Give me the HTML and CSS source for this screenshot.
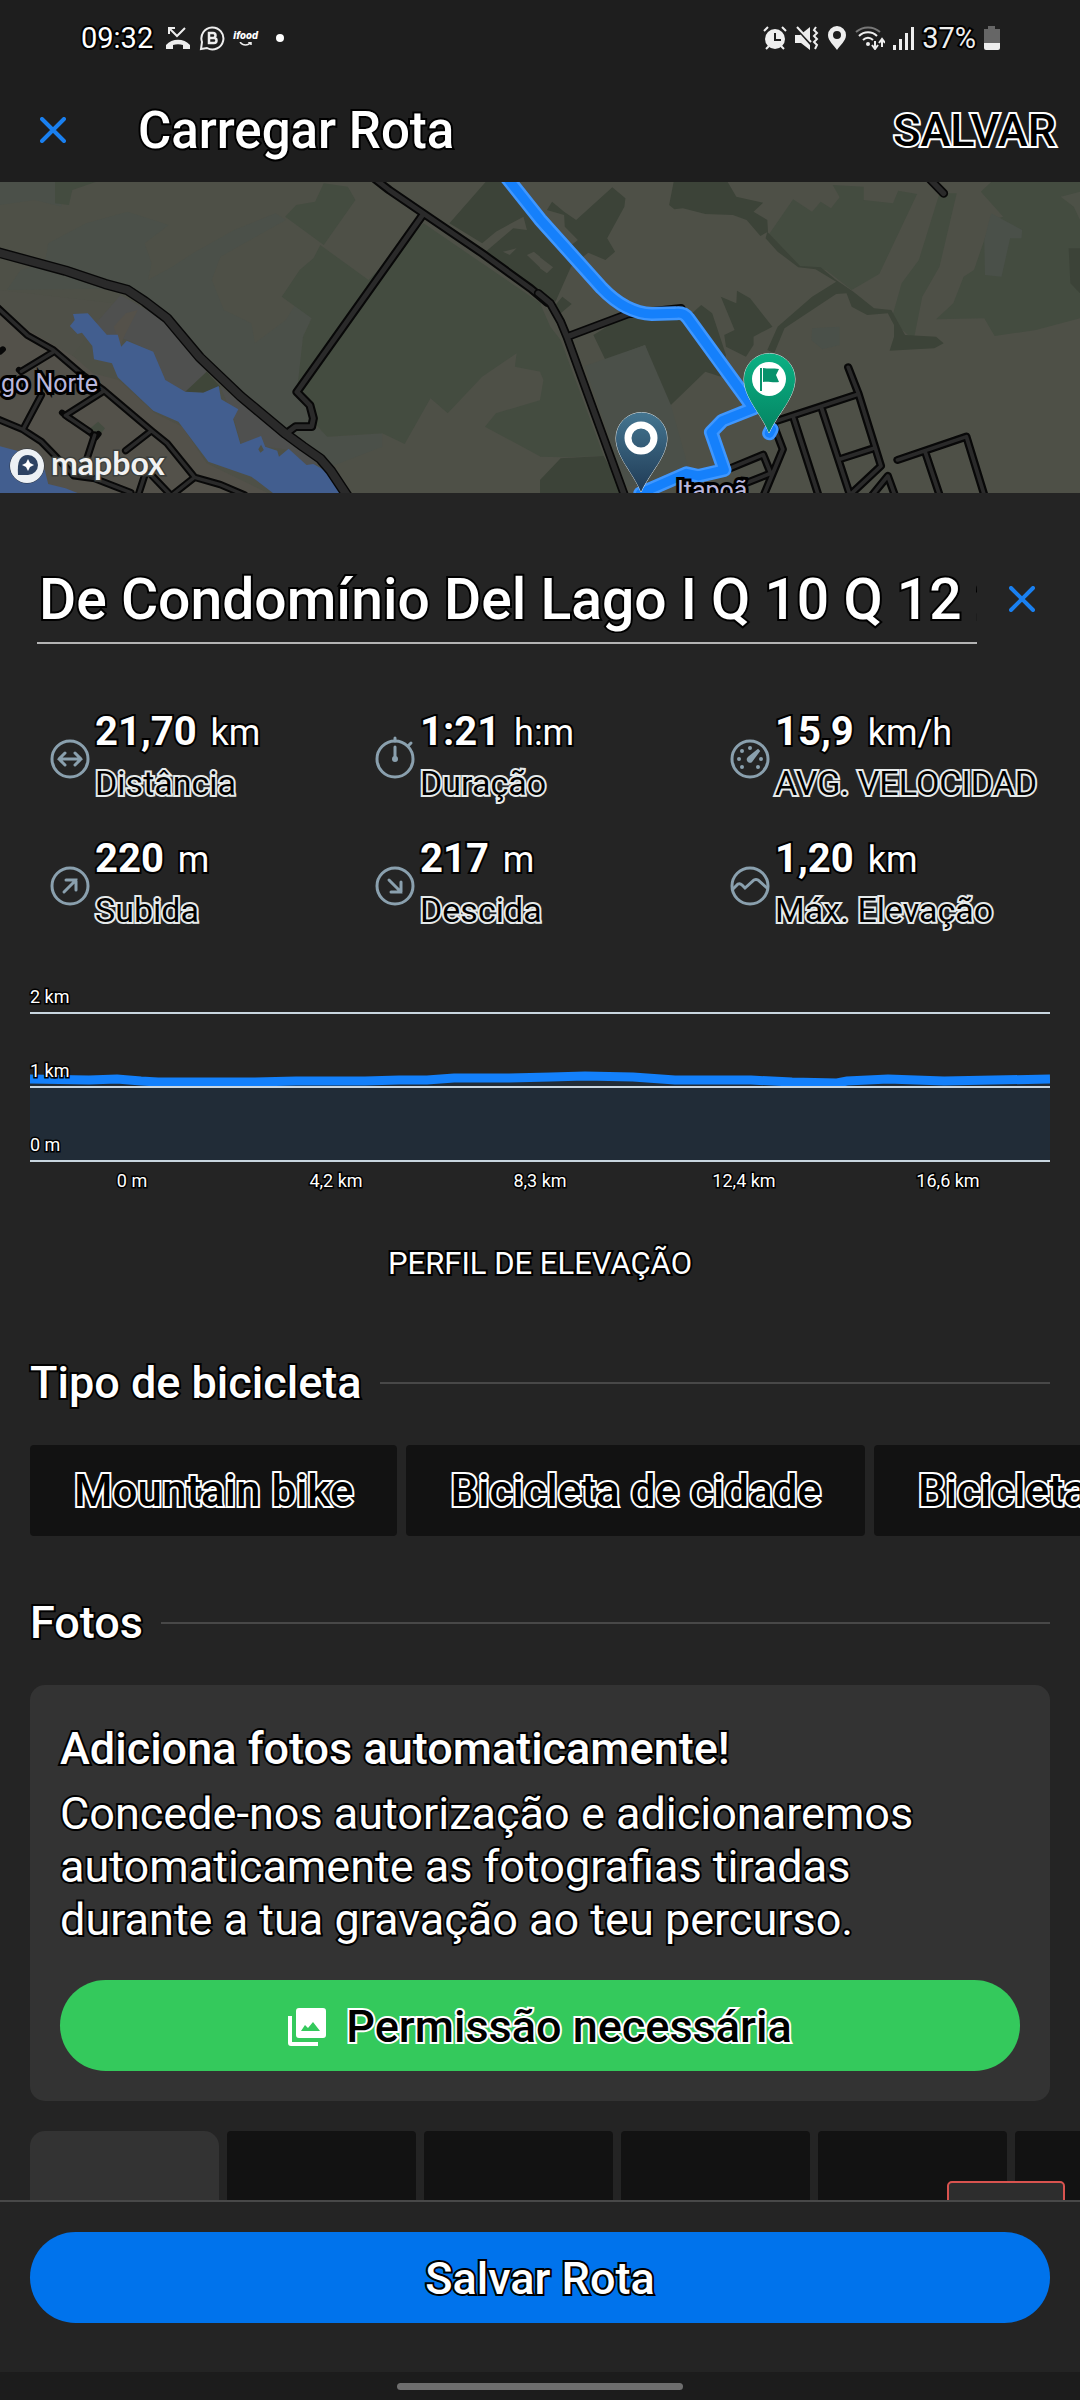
FILE: index.html
```html
<!DOCTYPE html>
<html lang="pt">
<head>
    <meta charset="UTF-8">
    <meta name="viewport" content="width=device-width, initial-scale=1.0">
    <title>Carregar Rota</title>
    <link rel="stylesheet" href="styles.css">
</head>
<body>

<div class="screen">

    <div class="statusbar">
        <span class="clock">09:32</span>
        <svg class="status-icon" width="26" height="26" viewBox="0 0 26 26" fill="none" stroke="#eee">
            <path d="M4 9V3h6M4 3l8 8 8-8" stroke-width="2"/>
            <path d="M1 24v-4c6-7 18-7 24 0v4h-7v-4c-3-1-7-1-10 0v4z" fill="#eee" stroke="none"/>
        </svg>
        <svg class="status-icon" width="26" height="26" viewBox="0 0 26 26" fill="none" stroke="#eee" stroke-width="2">
            <path d="M2 24l1-7A11 11 0 1 1 8 23z"/>
            <path d="M10 8h4a2.500 2.500 0 0 1 0 5h-4zM10 13h5a2.500 2.500 0 0 1 0 5h-5z" stroke-width="2.500"/>
        </svg>
        <span class="ifood">ifood
            <svg width="14" height="5" viewBox="0 0 14 5" fill="none" stroke="#eee" stroke-width="1.500"><path d="M1 0c3 4 8 4 11 0M9 0h3v3"/></svg>
        </span>
        <span class="dot"></span>

        <div class="status-right">
            <svg width="24" height="24" viewBox="0 0 24 24" fill="none" stroke="#eee" stroke-width="2">
                <circle cx="12" cy="13" r="10" fill="#eee" stroke="none"/>
                <path d="M12 7v7h6" stroke="#1e1e1e"/>
                <path d="M1 5l4-4M23 5l-4-4M3 23l3-3M21 23l-3-3"/>
            </svg>
            <svg width="24" height="24" viewBox="0 0 24 24" fill="none" stroke="#eee" stroke-width="2">
                <path d="M0 9h5l10-8v23l-9-7H0z" fill="#eee" stroke="none"/>
                <path d="M0 0l17 19" stroke="#1e1e1e" stroke-width="3"/>
                <path d="M2 1l14 15"/>
                <path d="M21 1l-2 3 3 3-3 3 3 3-3 3 3 3-2 4"/>
            </svg>
            <svg width="20" height="24" viewBox="0 0 20 24">
                <path d="M10 0a9 9 0 0 1 9 9c0 6-6 10-9 15C7 19 1 15 1 9a9 9 0 0 1 9-9zm0 5a4 4 0 1 0 0 8 4 4 0 0 0 0-8z" fill="#eee" fill-rule="evenodd"/>
            </svg>
            <svg width="30" height="24" viewBox="0 0 30 24" fill="none" stroke="#eee" stroke-width="2">
                <path d="M1 6c7-6 17-6 24 0" stroke="#777"/>
                <path d="M4 10c5-5 13-5 18 0M8 14c3-3 7-3 10 0"/>
                <circle cx="13" cy="18" r="2" fill="#eee" stroke="none"/>
                <path d="M20 15v7m-3-3l3 4 3-4M27 21v-7m-3 3l3-4 3 4"/>
            </svg>
            <svg width="21" height="24" viewBox="0 0 21 24" fill="#eee">
                <path d="M0 19h3v5H0zM6 13h3v11H6zM12 7h3v17h-3zM18 1h3v23h-3z"/>
            </svg>
            <span class="battery-text">37%</span>
            <svg width="16" height="24" viewBox="0 0 16 24">
                <path d="M4 0h7v3h5v14H0V3h4z" fill="#666"/>
                <path d="M0 17h16v5a2 2 0 0 1-2 2H2a2 2 0 0 1-2-2z" fill="#eee"/>
            </svg>
        </div>
    </div>

    <header class="appbar">
        <button class="icon-btn" aria-label="Fechar">
            <svg width="26" height="26" viewBox="0 0 26 26"><path d="M2 2l22 22M24 2L2 24"/></svg>
        </button>
        <h1>Carregar Rota</h1>
        <button class="save-link outlined">SALVAR</button>
    </header>

    <main class="content">

        <div class="map">
            <svg viewBox="0 0 1080 311" preserveAspectRatio="xMidYMid slice">
                <defs>
                    <linearGradient id="pin-blue" x1="0" y1="0" x2="0" y2="1">
                        <stop offset="0" stop-color="#447590"/>
                        <stop offset="1" stop-color="#203b56"/>
                    </linearGradient>
                    <linearGradient id="pin-green" x1="0" y1="0" x2="0" y2="1">
                        <stop offset="0" stop-color="#0bb184"/>
                        <stop offset="1" stop-color="#048462"/>
                    </linearGradient>
                    <!-- west side -->
                    <path id="west-main" d="M-10 216L190 272 305 312 370 330 420 364 485 415 580 532 700 650 830 762 880 800 930 836 960 872 1010 950"/>
                    <path id="west-mid" d="M1080 -10L1130 30 1232 102 1400 220 1540 325 1590 368M1228 104L862 636 900 676 910 715 905 740 858 740 832 760"/>
                    <path id="west-small" d="M-10 380L80 466 155 510 240 585M155 516L62 574M240 585L300 630 440 752 485 790 565 892 640 914 710 945M300 634L190 706 260 755M435 756L365 812M-10 716L65 748 120 785 170 838 215 888 275 896 380 938M120 645L68 746M565 892L500 945M400 950L422 880 435 880 495 945M275 765L248 850"/>
                    <!-- east side -->
                    <path id="east-mid" d="M-5 340L30 370 60 425 78 470 120 590 245 945M85 468L255 402 410 385M1125 -10L1172 40"/>
                    <path id="east-small" d="M680 725L925 642 895 562M925 642L990 858 900 945M735 710L808 945M818 686L900 945M870 838L965 806M680 740L705 808 650 945M545 868L648 824 670 880 560 925M965 945L1010 888 1030 945M1038 840L1238 770 1290 945M1118 815L1160 945"/>
                    <path id="route" d="M-110 -25L0 118 180 325C220 368 270 400 325 402L395 400C410 398 420 400 430 415L620 685 530 722 497 757 535 870 460 888 425 880 292 940M666 760L672 748"/>
                </defs>

                <rect width="1080" height="311" fill="#4e5047"/>

                <g transform="translate(0 -2) scale(.3444 .3333)">
                    <path fill="#4b5049" d="M0 0H160L180 80 100 60 0 75zM140 190L250 130 370 95 490 135 420 190 440 250 430 300 500 260 560 220 680 150 800 100 830 120 640 230 615 300 650 390 730 430 740 490 830 420 860 370 905 415 880 470 865 620 910 680 915 740 960 770 1110 760 1110 800 960 860 900 840 580 530 485 410 370 325 20 330 60 270 130 250z"/>
                    <path fill="#4f5048" d="M0 330L330 370 200 540 0 400z"/>
                    <path fill="#53514a" d="M0 400L215 530 270 580 345 600 450 700 530 740 600 850 790 945H0z"/>
                    <path fill="#4f504f" d="M350 345L480 420 600 575 540 635 475 600 440 515 370 480 300 460 270 440zM640 620L830 770 940 850 880 860 840 810 700 790 680 720z"/>
                    <path fill="#54514a" d="M365 400L400 390 360 470 350 500 330 440z"/>
                    <path fill="#3f4639" d="M600 575L640 620 590 638 538 635z"/>
                    <path fill="#444c40" d="M940 10L1010 20 1032 60 940 195 828 110 860 75 915 65zM930 195L1070 300 1230 130 1570 370V575L1495 560 1500 520 1400 590 1300 700 1250 655 1175 792 1110 760 950 770 905 720 910 680 862 636 880 470 905 415 818 350 870 270 910 235zM1570 660L1440 700 1408 740 1570 830zM160 0H295L210 30 200 75 160 70z"/>
                    <path fill="#3c4338" d="M1410 6L1305 130 1400 190 1440 155 1520 110 1530 150 1490 145 1410 215 1570 335V130L1460 6z"/>
                    <path fill="#4e5047" d="M1460 215L1500 205 1480 225zM1530 225L1550 215 1570 232V265z"/>
                    <path fill="#425e8f" d="M212 402L255 400 310 464H342L352 500 368 482 445 515 480 600 538 635 590 638 635 618 642 658 692 688 677 718 698 792 758 768 770 800 805 812 810 830 838 806 890 855 910 852 945 872 990 945H800L730 890 605 845 518 725 445 692 342 592 325 550 273 538 268 498 238 458 225 462 203 438 217 420zM-10 796L60 815 130 870 140 912 190 925 240 945H-10z"/>
                    <path fill="#4e5047" d="M750 808l8-14 8 16-10 8z"/>
                    <path fill="#444c40" d="M285 725L305 745 290 765 262 745z"/>

                    <g fill="none" stroke-linejoin="round" stroke-linecap="round">
                        <g stroke="#080808">
                            <use href="#west-small" stroke-width="22"/>
                            <use href="#west-mid" stroke-width="26"/>
                            <use href="#west-main" stroke-width="31"/>
                            <path stroke-width="18" d="M260 755L270 768M55 570L60 574M0 515L8 508M278 772L286 762M180 698L200 715"/>
                        </g>
                        <g stroke="#2a2a2a">
                            <use href="#west-small" stroke-width="10"/>
                            <use href="#west-mid" stroke-width="14"/>
                            <use href="#west-main" stroke-width="23"/>
                        </g>
                    </g>
                </g>

                <g transform="translate(540 -2) scale(.3444 .3333)">
                    <path fill="#444c40" d="M735 58L790 95 815 65 845 85 870 52 850 15 940 20V60L1025 70 1040 32 1095 42 985 282 905 330 830 270 750 258 660 170zM1160 40H1210L1160 260 1110 350 1085 480 1020 420 1050 310 1100 240zM1310 6H1568V415L1440 450 1320 468 1290 415 1150 418 1200 370 1230 290 1260 270 1310 120 1345 110 1280 35zM0 370L30 440 60 480 185 828 70 832 0 830V660L10 600 0 575z"/>
                    <path fill="#4d5147" d="M1512 50L1568 35V120L1550 80z"/>
                    <path fill="#4a5049" d="M1310 100L1400 150 1398 175H1365L1340 290 1292 285 1290 180zM790 445L870 440V495L820 508 788 480z"/>
                    <path fill="#3c4338" d="M210 22L248 55 245 80 195 175 218 215 190 240 140 218 90 260 45 365 0 335V130L60 220 110 180 72 140 70 105 20 90 35 65 70 95 105 120zM388 6H545L570 50 648 68 620 95 660 120 662 155 640 168 600 120 560 105 480 102 415 85 390 88 375 75zM660 155L755 258 815 262 860 300 910 335 970 385 1020 390 1060 465 1150 470 1172 490 1145 505 1090 508 1015 512 1028 470V435L1010 400 950 405 905 380 890 340 860 342 710 445 680 520 660 510 690 440 790 350 860 305 800 268 750 262 690 215 655 175zM525 350L570 370 572 332 610 355 675 440 620 470V495L598 530 540 500 535 465 565 450zM155 465L255 402 350 415 420 420 468 375 500 400 540 525 525 590 480 575 380 675 350 640 305 495 190 540zM1535 205H1568V340L1540 310zM0 900L60 835 185 828 245 940H0zM65 350L92 372 60 400 40 380z"/>
                    <path fill="#4e5047" d="M0 232L38 262 20 280 0 265z"/>
                    <path fill="#4b5049" d="M130 558L305 495 380 675 430 860 330 900 250 920z"/>

                    <g fill="none" stroke-linejoin="round" stroke-linecap="round">
                        <g stroke="#080808">
                            <use href="#east-small" stroke-width="24"/>
                            <use href="#east-mid" stroke-width="26"/>
                        </g>
                        <g stroke="#2a2a2a">
                            <use href="#east-small" stroke-width="11"/>
                            <use href="#east-mid" stroke-width="16"/>
                        </g>
                    </g>

                    <!-- recorded route -->
                    <g fill="none" stroke-linejoin="round" stroke-linecap="round">
                        <use href="#route" stroke="#3f97ff" stroke-width="42"/>
                        <use href="#route" stroke="#1580fb" stroke-width="27"/>
                    </g>
                </g>

                <text class="place" x="1" y="210">go Norte</text>
                <text class="place" x="677" y="317">Itapoã</text>

                <path d="M641 310C633 290 616 275 616 256a25.500 25.500 0 0 1 51 0C667 275 650 290 641 310z" fill="url(#pin-blue)" stroke="#dfe6ea"/>
                <circle cx="641" cy="256" r="13" fill="none" stroke="#fff" stroke-width="7"/>
                <path d="M769 251C761 231 744 216 744 197a25.500 25.500 0 0 1 51 0C795 216 778 231 769 251z" fill="url(#pin-green)" stroke="#dfe6ea"/>
                <circle cx="769" cy="197" r="17" fill="#fff"/>
                <path d="M760 186h2v23h-2zM763 186c5 1 10 0 16 1l-3 6 3 7c-6 1-11-1-16 0z" fill="#07926c"/>

                <circle cx="27" cy="284" r="17" fill="#edf1f5" stroke="#2c3440"/>
                <path d="M18 293c-1-14 2-20 10-20a10 10 0 0 1 0 20z" fill="#2d4263"/>
                <path d="M28 277l2 4 4 2-4 2-2 4-2-4-4-2 4-2z" fill="#fff"/>
                <text class="mapbox" x="51" y="293">mapbox</text>
            </svg>
        </div>

        <div class="title-row">
            <input class="route-name" type="text" aria-label="Nome da rota" value="De Condomínio Del Lago I Q 10 Q 12 25">
            <button class="icon-btn" aria-label="Limpar nome">
                <svg width="26" height="26" viewBox="0 0 26 26"><path d="M2 2l22 22M24 2L2 24"/></svg>
            </button>
        </div>

        <div class="stats">
            <div class="stat">
                <svg class="stat-icon" viewBox="0 0 40 46"><circle cx="20" cy="24" r="18"/><path d="M9 24h22M15 18l-6 6 6 6M25 18l6 6-6 6"/></svg>
                <div>
                    <div class="value"><b>21,70</b> km</div>
                    <div class="label outlined">Distância</div>
                </div>
            </div>
            <div class="stat">
                <svg class="stat-icon" viewBox="0 0 40 46"><circle cx="20" cy="24" r="18"/><path d="M20 6V3M33 11l3-3M20 12v12"/><circle cx="20" cy="24" r="1.500"/></svg>
                <div>
                    <div class="value"><b>1:21</b> h:m</div>
                    <div class="label outlined">Duração</div>
                </div>
            </div>
            <div class="stat">
                <svg class="stat-icon" viewBox="0 0 40 46"><circle cx="20" cy="24" r="18"/><path d="M29 15L19 23a1 1 0 0 0 2 3z" fill="#8aa0ae"/><path class="ticks" d="M20 13h0M12 16h0M9 24h0M31 24h0M12 32h0M28 32h0"/></svg>
                <div>
                    <div class="value"><b>15,9</b> km/h</div>
                    <div class="label outlined">AVG. VELOCIDAD</div>
                </div>
            </div>
            <div class="stat">
                <svg class="stat-icon" viewBox="0 0 40 46"><circle cx="20" cy="24" r="18"/><path d="M14 30l12-12M16 18h10v10"/></svg>
                <div>
                    <div class="value"><b>220</b> m</div>
                    <div class="label outlined">Subida</div>
                </div>
            </div>
            <div class="stat">
                <svg class="stat-icon" viewBox="0 0 40 46"><circle cx="20" cy="24" r="18"/><path d="M14 18l12 12M26 20v10H16"/></svg>
                <div>
                    <div class="value"><b>217</b> m</div>
                    <div class="label outlined">Descida</div>
                </div>
            </div>
            <div class="stat">
                <svg class="stat-icon" viewBox="0 0 40 46"><circle cx="20" cy="24" r="18"/><path d="M3 27l5-5q2-1 4 1l3 3 9-8q2-1 4 0l9 8"/></svg>
                <div>
                    <div class="value"><b>1,20</b> km</div>
                    <div class="label outlined">Máx. Elevação</div>
                </div>
            </div>
        </div>

        <div class="chart">
            <svg class="curve" viewBox="0 0 1020 100" preserveAspectRatio="none">
                <path class="area" d="M0 17L87 17 128 20 225 20 266 19 369 18 424 16 479 16 555 14 603 15 645 18 721 18 762 20 807 21 817 19 858 17 914 19 1020 17V100H0z"/>
                <path class="line" d="M0 17L59 18 87 17 111 19 128 20 225 20 266 19 335 19 369 18 397 18 424 16 479 16 521 15 555 14 603 15 645 18 721 18 762 20 807 21 817 19 858 17 914 19 1020 17"/>
            </svg>
            <div class="band"><span>2 km</span></div>
            <div class="band"><span>1 km</span></div>
            <div class="band"><span>0 m</span></div>
        </div>
        <div class="axis">
            <span>0 m</span>
            <span>4,2 km</span>
            <span>8,3 km</span>
            <span>12,4 km</span>
            <span>16,6 km</span>
        </div>
        <p class="chart-title">PERFIL DE ELEVAÇÃO</p>

        <h2 class="section">Tipo de bicicleta</h2>
        <div class="chips">
            <button class="chip outlined">Mountain bike</button>
            <button class="chip outlined">Bicicleta de cidade</button>
            <button class="chip outlined">Bicicleta de estrada</button>
        </div>

        <h2 class="section">Fotos</h2>
        <div class="card">
            <h3>Adiciona fotos automaticamente!</h3>
            <p>Concede-nos autorização e adicionaremos automaticamente as fotografias tiradas durante a tua gravação ao teu percurso.</p>
            <button class="btn btn-green outlined">
                <svg width="38" height="38" viewBox="0 0 38 38" fill="#fff">
                    <path d="M0 8h4v26h26v4H3a3 3 0 0 1-3-3z"/>
                    <path d="M11 0h24a3 3 0 0 1 3 3v24a3 3 0 0 1-3 3H11a3 3 0 0 1-3-3V3a3 3 0 0 1 3-3zm2 23h19l-7-9-5 6-3-3z" fill-rule="evenodd"/>
                </svg>
                Permissão necessária
            </button>
        </div>

        <div class="thumbs">
            <div class="thumb add"></div>
            <div class="thumb"></div>
            <div class="thumb"></div>
            <div class="thumb"></div>
            <div class="thumb"></div>
            <div class="thumb"></div>
            <div class="red-box"></div>
        </div>

    </main>

    <footer class="bottom">
        <button class="btn btn-blue">Salvar Rota</button>
    </footer>
    <div class="navbar"><span></span></div>

</div>

</body>
</html>
```
FILE: styles.css
```css
* {
    box-sizing: border-box;
}
body {
    margin: 0;
    background: #242424;
    color: #fff;
    font-family: Roboto, sans-serif;
    -webkit-text-stroke: 4px #000;
    paint-order: stroke fill;
}
h1, h2, h3, p {
    margin: 0;
    font-weight: 500;
}
button, input {
    border: 0;
    padding: 0;
    background: none;
    color: inherit;
    font-family: inherit;
    -webkit-text-stroke: inherit;
    paint-order: inherit;
}
svg {
    display: block;
    flex: none;
}
.outlined {
    color: #000;
    -webkit-text-stroke: 4px #fff;
}
.screen {
    display: flex;
    flex-direction: column;
    height: 100vh;
}

/* status bar */
.statusbar {
    display: flex;
    align-items: center;
    height: 76px;
    padding: 0 80px 0 81px;
    background: #1e1e1e;
    font-size: 29px;
}
.clock {
    margin-right: 12px;
}
.status-icon {
    margin-right: 8px;
}
.ifood {
    font-size: 11px;
    font-weight: 900;
    font-style: italic;
    line-height: 12px;
    -webkit-text-stroke: 0;
}
.ifood svg {
    margin-left: 6px;
}
.dot {
    width: 8px;
    height: 8px;
    margin-left: 18px;
    border-radius: 50%;
    background: #fff;
}
.status-right {
    display: flex;
    align-items: center;
    gap: 8px;
    margin-left: auto;
}
.battery-text {
    color: #eee;
}

/* app bar */
.appbar {
    display: flex;
    align-items: center;
    height: 106px;
    padding: 2px 24px 0 40px;
    background: #1e1e1e;
}
.icon-btn path {
    stroke: #1a80f0;
    stroke-width: 4;
    stroke-linecap: round;
}
.appbar h1 {
    margin-left: 72px;
    font-size: 51px;
}
.save-link {
    margin-left: auto;
    font-size: 45px;
    font-weight: 500;
}

/* scrolling part */
.content {
    position: relative;
    flex: 1;
    min-height: 0;
    overflow: hidden;
}
.map svg {
    width: 100%;
}
.place {
    fill: #b9b7dd;
    stroke: #000;
    stroke-width: 6px;
    font-size: 25px;
}
.mapbox {
    fill: #f2f2f2;
    stroke: #3c3f3c;
    stroke-width: 3px;
    font-family: Lato, sans-serif;
    font-size: 32px;
    font-weight: 700;
}
.title-row {
    display: flex;
    align-items: center;
    gap: 32px;
    padding: 61px 45px 0 37px;
}
.route-name {
    flex: 1;
    min-width: 0;
    height: 90px;
    padding: 2px 0 0 2px;
    border-bottom: 2px solid #b4b4b4;
    font-size: 57px;
    font-weight: 500;
}

/* stats */
.stats {
    display: grid;
    grid-template-columns: 325fr 355fr 350fr;
    row-gap: 26px;
    padding: 63px 0 0 50px;
}
.stat {
    display: flex;
    align-items: center;
    gap: 5px;
}
.stat-icon {
    width: 40px;
    height: 46px;
    fill: none;
    stroke: #8aa0ae;
    stroke-width: 3;
    stroke-linecap: round;
}
.ticks {
    stroke-width: 4;
}
.value {
    font-size: 36px;
    line-height: 50px;
}
.value b {
    margin-right: 5px;
    font-size: 40px;
    font-weight: 700;
}
.label {
    font-size: 34px;
    line-height: 50px;
    -webkit-text-stroke-color: #e6eaea;
}

/* elevation chart */
.chart {
    position: relative;
    margin: 5px 30px 0;
}
.band {
    position: relative;
    display: flex;
    align-items: flex-end;
    height: 74px;
    padding-bottom: 5px;
    border-bottom: 2px solid #c9d6e0;
    font-size: 18px;
    line-height: 21px;
}
.curve {
    position: absolute;
    left: 0;
    bottom: 0;
    width: 100%;
    height: 100px;
}
.area {
    fill: #212c37;
}
.line {
    fill: none;
    stroke: #1380fb;
    stroke-width: 9;
}
.band, .axis {
    -webkit-text-stroke-width: 3px;
}
.axis {
    display: grid;
    grid-template-columns: repeat(5, 1fr);
    margin: 8px 30px 0;
    font-size: 18px;
    line-height: 21px;
    text-align: center;
}
.chart-title {
    margin: 55px 0 74px;
    font-size: 31px;
    font-weight: 400;
    line-height: 36px;
    text-align: center;
}

/* sections */
.section {
    display: flex;
    align-items: center;
    gap: 18px;
    margin: 60px 30px 35px;
    font-size: 45px;
    line-height: 54px;
}
.section::after {
    content: "";
    flex: 1;
    height: 2px;
    background: #484848;
}
.chips {
    display: flex;
    gap: 9px;
    margin-left: 30px;
    overflow: hidden;
}
.chip {
    flex: none;
    height: 91px;
    padding: 0 44px;
    border-radius: 4px;
    background: #121212;
    font-size: 44px;
    font-weight: 500;
}
.card {
    margin: 0 30px;
    padding: 37px 30px 30px;
    border-radius: 15px;
    background: #333;
}
.card h3 {
    font-size: 45px;
    line-height: 53px;
}
.card p {
    margin: 12px 0 34px;
    padding-right: 60px;
    font-size: 45px;
    font-weight: 400;
    line-height: 53px;
}
.btn {
    display: flex;
    align-items: center;
    justify-content: center;
    gap: 20px;
    width: 100%;
    height: 91px;
    padding-top: 2px;
    border-radius: 46px;
    font-size: 45px;
    font-weight: 500;
}
.btn-green {
    background: #34c95c;
}
.btn-blue {
    background: #0073ec;
}
.thumbs {
    position: relative;
    display: flex;
    gap: 8px;
    margin: 30px 0 0 30px;
    overflow: hidden;
}
.thumb {
    flex: none;
    width: 189px;
    height: 189px;
    border-radius: 4px;
    background: #121212;
}
.thumb.add {
    border-radius: 15px;
    background: #333;
}
.red-box {
    position: absolute;
    top: 50px;
    right: 15px;
    width: 118px;
    height: 118px;
    border: 2px solid #d9534f;
    border-radius: 5px;
    background: #2d2d2d;
}

/* bottom bar */
.bottom {
    padding: 30px 30px 49px;
    border-top: 2px solid #484848;
}
.navbar {
    display: flex;
    align-items: center;
    justify-content: center;
    height: 28px;
    background: #1c1c1c;
}
.navbar span {
    width: 286px;
    height: 7px;
    border-radius: 4px;
    background: #6e6e6e;
}
```
